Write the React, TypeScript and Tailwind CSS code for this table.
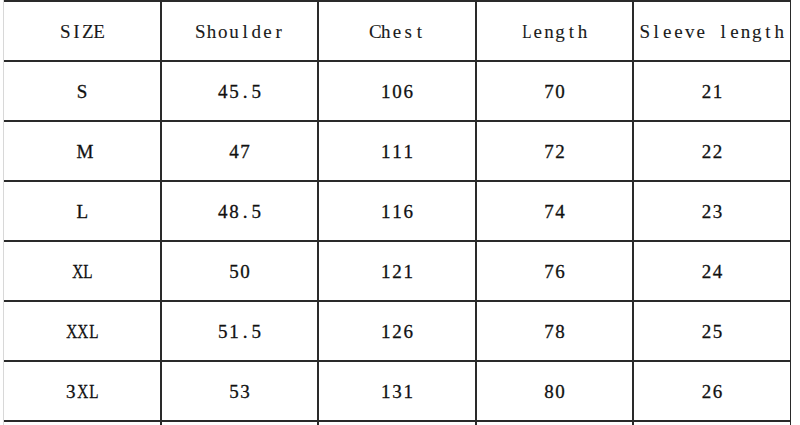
import React from "react";

const headers = ["SIZE", "Shoulder", "Chest", "Length", "Sleeve length"];
const rows = [
  ["S", "45.5", "106", "70", "21"],
  ["M", "47", "111", "72", "22"],
  ["L", "48.5", "116", "74", "23"],
  ["XL", "50", "121", "76", "24"],
  ["XXL", "51.5", "126", "78", "25"],
  ["3XL", "53", "131", "80", "26"],
  ["", "", "", "", ""],
];

const wide = new Set(["X", "M", "L"]);

function Mono({ text }: { text: string }) {
  const multi = text.length > 1;
  return (
    <span className="inline-flex">
      {text.split("").map((ch, k) => (
        <span key={k} className="inline-block w-[11.2px] text-center">
          {ch === " " ? (
            "\u00a0"
          ) : multi && wide.has(ch) ? (
            <span className="inline-block scale-x-[0.8]">{ch}</span>
          ) : (
            ch
          )}
        </span>
      ))}
    </span>
  );
}

export default function App() {
  return (
    <div className="w-[800px] h-[425px] overflow-hidden bg-white flex">
      <div className="w-[3px] shrink-0 bg-white" />
      <div className="w-[1px] shrink-0 bg-[#d8d8d8]" />
      <div className="flex flex-col">
        <div className="w-[787px] pt-[2px] pr-[2px] bg-[#2a2a2a]">
          <div
            className="grid grid-cols-[156px_155px_156px_155px_156px] auto-rows-[58px] gap-[2px]"
            style={{ fontFamily: '"Liberation Serif", "DejaVu Serif", serif' }}
          >
            {headers.map((c, j) => (
              <div
                key={`h-${j}`}
                className="bg-white flex items-center justify-center pt-[3px] text-[19px] text-[#1a1a1a] whitespace-nowrap [-webkit-text-stroke:0.1px_#1a1a1a]"
              >
                <Mono text={c} />
              </div>
            ))}
            {rows.flatMap((r, i) =>
              r.map((c, j) => (
                <div
                  key={`${i}-${j}`}
                  className="bg-white flex items-center justify-center pt-[3px] text-[19px] text-[#111] whitespace-nowrap [-webkit-text-stroke:0.3px_#111]"
                >
                  <Mono text={c} />
                </div>
              ))
            )}
          </div>
        </div>
      </div>
    </div>
  );
}
